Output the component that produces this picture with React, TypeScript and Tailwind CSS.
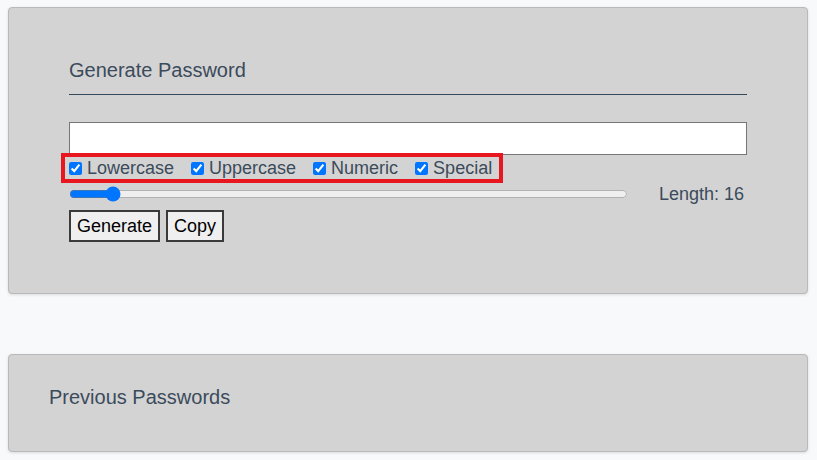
import React from "react";

export default function App() {
  const font = { fontFamily: '"Liberation Sans", Arial, sans-serif' };
  const opts = ["Lowercase", "Uppercase", "Numeric", "Special"];
  return (
    <div className="min-h-[460px] w-full bg-[#f8f9fb] pt-[7px]" style={font}>
      <div className="ml-[8px] w-[800px] rounded-[4px] border border-[#b9b9b9] bg-[#d3d3d3] px-[60px] pt-[50px] pb-[51px] shadow-[0_1px_3px_rgba(0,0,0,0.12)]">
        <div className="border-b border-[#34495e] pb-[12px] text-[20px] leading-[24px] text-[#3b4b5b]">
          Generate Password
        </div>
        <input
          type="text"
          className="mt-[27px] block h-[33px] w-full border border-[#767676] bg-white outline-none"
        />
        <div className="mt-[2px] ml-[-4px] flex h-[22px] w-fit items-center gap-[17px] pl-[4px] pr-[7px] outline-[4px] outline-solid outline-[#e8161e]">
          {opts.map((o) => (
            <label key={o} className="flex items-center gap-[5px] text-[18px] leading-[22px] text-[#3b4b5b]">
              <input type="checkbox" defaultChecked className="m-0 h-[13px] w-[13px]" />
              <span>{o}</span>
            </label>
          ))}
        </div>
        <div className="mt-[4px] flex items-center">
          <input
            type="range"
            min={8}
            max={128}
            defaultValue={16}
            className="m-0 w-[559px]"
          />
          <span className="ml-[31px] text-[18px] leading-[22px] text-[#3b4b5b]">Length: 16</span>
        </div>
        <div className="mt-[5px] flex gap-[6px]">
          <button className="h-[32px] border-2 border-[#3a3a3a] bg-[#efefef] px-[6px] text-[18px] leading-[22px] text-black">
            Generate
          </button>
          <button className="h-[32px] border-2 border-[#3a3a3a] bg-[#efefef] px-[6px] text-[18px] leading-[22px] text-black">
            Copy
          </button>
        </div>
      </div>
      <div className="mt-[60px] ml-[8px] w-[800px] rounded-[4px] border border-[#b9b9b9] bg-[#d3d3d3] px-[40px] pt-[30px] pb-[42px] shadow-[0_1px_3px_rgba(0,0,0,0.12)]">
        <div className="text-[20px] leading-[24px] text-[#3b4b5b]">Previous Passwords</div>
      </div>
    </div>
  );
}
